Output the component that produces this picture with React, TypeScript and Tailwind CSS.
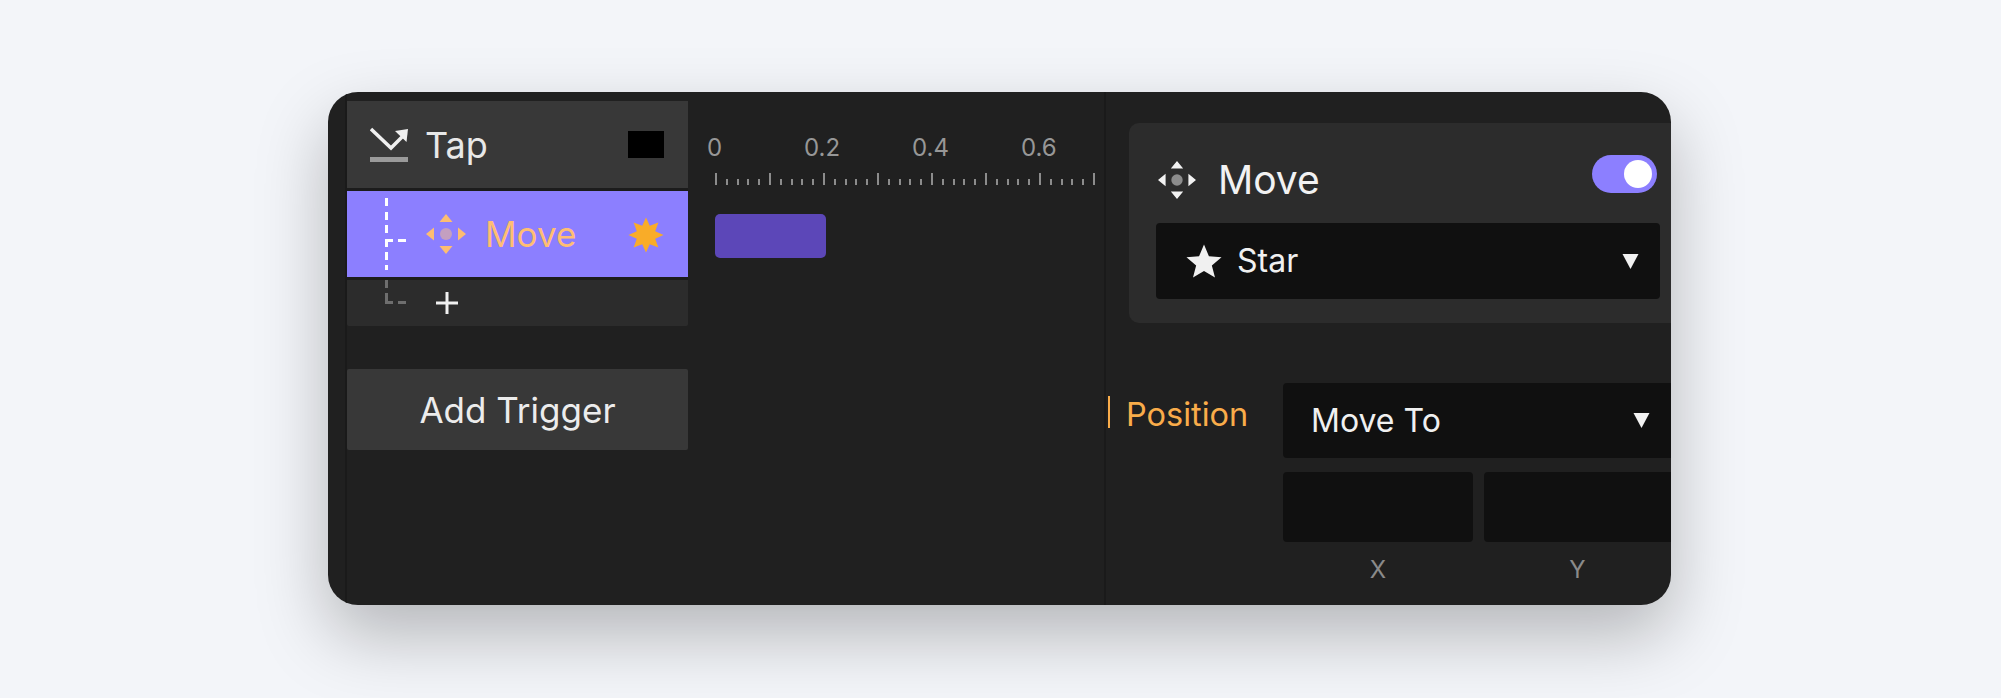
const inter = "font-['Inter','Liberation_Sans',sans-serif]";

const burst = Array.from({ length: 16 }, (_, i) => {
  const r = i % 2 === 0 ? 17.5 : 10;
  const a = (i * Math.PI) / 8 - Math.PI / 2;
  return `${(18 + r * Math.cos(a)).toFixed(1)},${(18 + r * Math.sin(a)).toFixed(1)}`;
}).join(" ");

function MoveIcon({ arrow, dot, size, className }: { arrow: string; dot: string; size: number; className?: string }) {
  return (
    <svg width={size} height={size} viewBox="0 0 40 40" className={className}>
      <path d="M20 0l6.500 8h-13z M20 40l6.500-8h-13z M0 20l8-6.500v13z M40 20l-8-6.500v13z" fill={arrow} />
      <circle cx="20" cy="20" r="6" fill={dot} />
    </svg>
  );
}

function Caret() {
  return (
    <svg width="17" height="15" viewBox="0 0 16 15">
      <path d="M0 0h16l-8 15z" fill="#f2f2f2" />
    </svg>
  );
}

function Ruler() {
  const ticks = Array.from({ length: 36 }, (_, i) => i);
  return (
    <div className="flex items-end gap-[8.8px] h-[12px] mt-[11px]">
      {ticks.map((i) => (
        <div key={i} className={i % 5 === 0 ? "w-[2px] h-[12px] bg-[#8c8c8c]" : "w-[2px] h-[6px] bg-[#8c8c8c]"} />
      ))}
    </div>
  );
}

function TriggerList() {
  return (
    <div className="w-[341px] shrink-0 pt-[9px]">
      <div className="h-[87px] bg-[#383838] flex items-center pl-[23px] pr-[24px]">
        <svg width="38" height="36" viewBox="0 0 38 36" className="mr-[17px]">
          <path d="M1 2l20 19L36 6" fill="none" stroke="#f0f0f0" strokeWidth="3.500" />
          <path d="M25 4l13-2-1.500 13z" fill="#f0f0f0" />
          <rect x="0" y="30" width="38" height="5" fill="#9a9a9a" />
        </svg>
        <span className="text-[36px] text-[#e8e8e8] mt-[1px]">Tap</span>
        <div className="ml-auto w-[36px] h-[27px] bg-black" />
      </div>
      <div className="h-[3px] bg-[#1c1c1c]" />
      <div className="relative h-[86px] bg-[#8c7fff] flex items-center pl-[79px] pr-[24px]">
        <div className="absolute left-[38px] top-[7px] h-[72px] w-[3px] bg-[repeating-linear-gradient(180deg,#fff_0_8px,transparent_8px_13.500px)]" />
        <div className="absolute left-[38px] top-[48px] w-[8px] h-[3px] bg-white" />
        <div className="absolute left-[51px] top-[48px] w-[8px] h-[3px] bg-white" />
        <MoveIcon arrow="#fdbd72" dot="#c49fc0" size={40} />
        <span className="ml-[19px] text-[35px] text-[#ffbe73]">Move</span>
        <svg width="36" height="36" viewBox="0 0 36 36" className="ml-auto mt-[1px]">
          <polygon points={burst} fill="#f9ac28" />
        </svg>
      </div>
      <div className="h-[3px] bg-[#1c1c1c]" />
      <div className="relative h-[46px] bg-[#2c2c2c] rounded-b-[2px] flex items-center pl-[89px]">
        <div className="absolute left-[38px] top-0 h-[8px] w-[3px] bg-[#6e6e6e]" />
        <div className="absolute left-[38px] top-[13px] h-[11px] w-[3px] bg-[#6e6e6e]" />
        <div className="absolute left-[38px] top-[21px] w-[8px] h-[3px] bg-[#6e6e6e]" />
        <div className="absolute left-[51px] top-[21px] w-[8px] h-[3px] bg-[#6e6e6e]" />
        <svg width="22" height="22" viewBox="0 0 22 22">
          <path d="M11 0v22M0 11h22" stroke="#f0f0f0" strokeWidth="3" />
        </svg>
      </div>
      <div className="mt-[43px] h-[81px] bg-[#383838] rounded-[2px] flex items-center justify-center text-[35px] text-[#ececec]">
        <span className="mt-[2px]">Add Trigger</span>
      </div>
    </div>
  );
}

function Timeline() {
  return (
    <div className="w-[418px] shrink-0 border-r-2 border-[#1a1a1a] pl-[20px] pt-[42px] overflow-hidden">
      <div className="flex h-[28px] text-[24px] leading-[28px] text-[#979797] -ml-[1px]">
        <span className="w-[97px]">0</span>
        <span className="w-[108px]">0.2</span>
        <span className="w-[109px]">0.4</span>
        <span>0.6</span>
      </div>
      <div className="ml-[7px]">
        <Ruler />
      </div>
      <div className="ml-[7px] mt-[29px] w-[111px] h-[44px] bg-[#5c47b8] rounded-[5px]" />
    </div>
  );
}

function Inspector() {
  return (
    <div className="flex-1 min-w-0 pt-[31px]">
      <div className="ml-[23px] h-[200px] bg-[#2c2c2c] rounded-l-[10px] pl-[27px] pr-[11px] pt-[32px]">
        <div className="flex items-center h-[38px] pr-[3px]">
          <MoveIcon arrow="#f2f2f2" dot="#8c8c8c" size={38} className="mt-[12px] ml-[2px]" />
          <span className="ml-[22px] mt-[12px] text-[39px] text-[#f2f2f2]">Move</span>
          <div className="ml-auto w-[65px] h-[38px] rounded-full bg-[#8c7fff] flex items-center justify-end pr-[5px]">
            <div className="w-[28px] h-[28px] rounded-full bg-white" />
          </div>
        </div>
        <div className="mt-[30px] h-[76px] bg-[#101010] rounded-[4px] flex items-center pl-[30px] pr-[21px]">
          <svg width="36" height="34" viewBox="0 0 38 35">
            <path d="M19 0l5.200 12.500 13.300 1-10.200 8.800 3.300 12.700L19 28l-11.600 7 3.300-12.700L.5 13.500l13.300-1z" fill="#f0f0f0" />
          </svg>
          <span className="ml-[15px] text-[32px] text-[#f0f0f0]">Star</span>
          <div className="ml-auto"><Caret /></div>
        </div>
      </div>
      <div className="flex mt-[60px]">
        <div className="ml-[2px] w-[175px] shrink-0 h-[32px] mt-[13px] border-l-2 border-[#f9ac4a] pl-[16px] text-[32.500px] leading-[38px] text-[#f9ac4a]">
          Position
        </div>
        <div className="flex-1 min-w-0">
          <div className="h-[75px] bg-[#101010] rounded-l-[4px] flex items-center pl-[28px] pr-[21px] text-[32px] text-[#f0f0f0]">
            Move To
            <div className="ml-auto"><Caret /></div>
          </div>
          <div className="grid grid-cols-[190px_1fr] gap-x-[11px] mt-[14px]">
            <div className="h-[70px] bg-[#101010] rounded-[4px]" />
            <div className="h-[70px] bg-[#101010] rounded-l-[4px]" />
            <div className="text-center text-[24px] text-[#8a8a8a] mt-[10px]">X</div>
            <div className="text-center text-[24px] text-[#8a8a8a] mt-[10px]">Y</div>
          </div>
        </div>
      </div>
    </div>
  );
}

export default function App() {
  return (
    <div className={`${inter} w-[2001px] h-[698px] bg-[#f3f5f9] pl-[328px] pt-[92px] overflow-hidden`}>
      <div className="w-[1343px] h-[513px] rounded-[30px] bg-[#202020] shadow-[0_30px_70px_rgba(0,0,0,0.26)] overflow-hidden flex">
        <div className="w-[19px] shrink-0 border-r-2 border-[#1a1a1a]" />
        <TriggerList />
        <Timeline />
        <Inspector />
      </div>
    </div>
  );
}
